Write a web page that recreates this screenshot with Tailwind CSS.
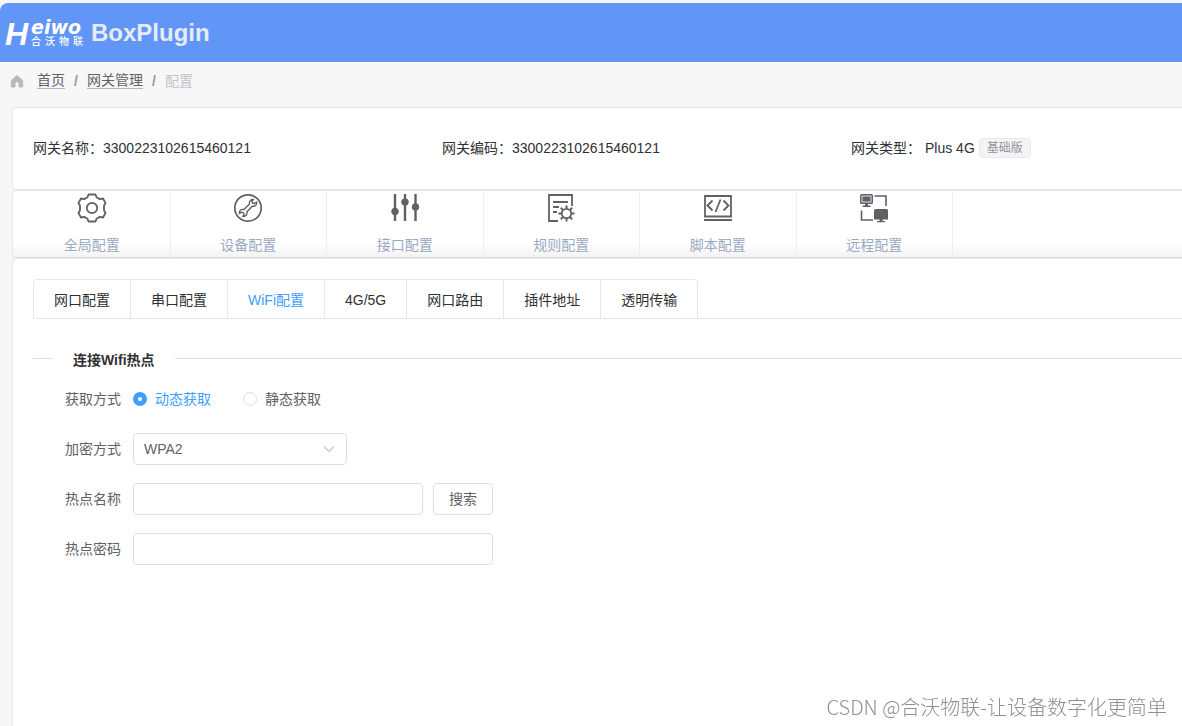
<!DOCTYPE html>
<html lang="zh-CN">
<head>
<meta charset="utf-8">
<title>BoxPlugin</title>
<script src="https://cdn.jsdelivr.net/npm/@tailwindcss/browser@4"></script>
</head>
<body class="flex h-screen flex-col overflow-hidden bg-[#f7f7f7] pt-[3px] font-['Liberation_Sans','Noto_Sans_CJK_SC',sans-serif] text-sm text-[#303133]">
  <header class="flex h-[59px] shrink-0 items-center gap-[6px] rounded-tl-lg bg-[#6196f6] pl-[5px]">
    <svg class="h-10 w-20 overflow-visible" viewBox="0 0 80 40" fill="#fff" role="img" aria-label="合沃物联">
      <text x="0" y="32" font-family="Liberation Sans" font-size="32" font-weight="bold" font-style="italic">H</text>
      <text x="26" y="21" font-family="DejaVu Sans" font-size="19" font-weight="bold" font-style="italic">eiwo</text>
      <text y="32" x="26 40 54 68" font-family="Noto Sans CJK SC" font-size="10" font-weight="500">合沃物联</text>
    </svg>
    <h1 class="text-2xl font-bold text-[#e6ebf5]">BoxPlugin</h1>
  </header>

  <nav class="flex h-[37px] shrink-0 items-center pl-[10px] text-[#606266]" aria-label="面包屑">
    <svg class="mr-[13px] h-[14px] w-[14px]" viewBox="0 0 14 14" fill="#b9b9b9"><path d="M7 1.500 1.300 6.500V13H5V9.500a2 2 0 0 1 4 0V13h3.700V6.500z" stroke="#b9b9b9" stroke-linejoin="round"/></svg>
    <a href="#" class="border-b border-[#b5b5b5] leading-4">首页</a>
    <span class="w-[22px] text-center font-bold text-[#999]">/</span>
    <a href="#" class="border-b border-[#b5b5b5] leading-4">网关管理</a>
    <span class="w-[22px] text-center font-bold text-[#999]">/</span>
    <span class="leading-4 text-[#c0c4cc]">配置</span>
  </nav>

  <main class="ml-3 mt-2 flex grow flex-col">
    <section class="flex h-[83px] shrink-0 items-center overflow-hidden whitespace-nowrap rounded-l border border-r-0 border-[#e4e7ed] bg-white pb-px pl-5">
      <p class="w-[409px] shrink-0">网关名称：3300223102615460121</p>
      <p class="w-[409px] shrink-0">网关编码：3300223102615460121</p>
      <p class="flex items-center">网关类型：<span class="ml-1">Plus 4G</span><span class="ml-1 rounded border border-[#e9e9eb] bg-[#f4f4f5] px-[7px] text-xs leading-[18px] text-[#909399]">基础版</span></p>
    </section>

    <section class="h-[68px] shrink-0 overflow-hidden rounded-l border border-r-0 border-[#e4e7ed] border-b-[#d8dbe3] bg-linear-to-b from-white from-80% to-[#f3f3f5] pl-px">
      <div class="grid h-full w-[1252px] grid-cols-8 text-[#99a9c4]">
        <a href="#" class="flex flex-col items-center gap-3 border-r border-[#ebeef5] pt-[2px]">
          <svg class="h-[30px] w-[30px] shrink-0" viewBox="0 0 30 30" fill="none" stroke="#5f6165" stroke-width="1.800"><path d="M11.500 1.500h7l1 2.800 3.300 1.800 3.200-.6 2.500 4.500-1.500 2.700v4.600l1.500 2.700-2.500 4.500-3.200-.6-3.300 1.800-1 2.800h-7l-1-2.800-3.300-1.800-3.200.6L1.500 20 3 17.300v-4.600L1.500 10 4 5.500l3.200.6 3.300-1.800z" stroke-linejoin="round"/><circle cx="15" cy="15" r="5.200"/></svg>
          <span class="leading-5">全局配置</span>
        </a>
        <a href="#" class="flex flex-col items-center gap-3 border-r border-[#ebeef5] pt-[2px]">
          <svg class="h-[30px] w-[30px] shrink-0" viewBox="0 0 30 30" fill="none" stroke="#5f6165"><circle cx="15" cy="15" r="13.200" stroke-width="1.700"/><path d="M20.500 6.500c-2.500-.3-4.500 1.500-4 4.500L11 16.500c-3-.7-5 1.200-4.500 4l2-1.300 2 .6.500 2-1.300 1.600c3 .3 4.800-1.800 4.200-4.700l5.500-5.500c2.800.6 4.800-1.500 4.200-4.200L21.500 10.500l-2-.5-.5-2z" stroke-width="1.400" stroke-linejoin="round"/></svg>
          <span class="leading-5">设备配置</span>
        </a>
        <a href="#" class="flex flex-col items-center gap-3 border-r border-[#ebeef5] pt-[2px]">
          <svg class="h-[30px] w-[30px] shrink-0" viewBox="0 0 30 30" fill="#5f6165" stroke="#5f6165"><path d="M5 1v27M15 1v27M25.500 1v27" stroke-width="2.400"/><circle cx="5" cy="18.500" r="3.300"/><circle cx="15" cy="9" r="3.300"/><circle cx="25.500" cy="14" r="3.300"/></svg>
          <span class="leading-5">接口配置</span>
        </a>
        <a href="#" class="flex flex-col items-center gap-3 border-r border-[#ebeef5] pt-[2px]">
          <svg class="h-[30px] w-[30px] shrink-0" viewBox="0 0 30 30" fill="none" stroke="#5f6165" stroke-width="1.800"><path d="M12 28H3V2h23v11M7 9h15M7 14h6M7 19h4"/><circle cx="20.500" cy="20.500" r="4.700"/><path d="M20.500 12.500v3.300M20.500 25.200v3.300M12.500 20.500h3.300M25.200 20.500h3.300M14.800 14.800l2.400 2.400M23.800 23.800l2.400 2.400M14.800 26.200l2.400-2.400M23.800 17.200l2.400-2.400" stroke-width="2"/></svg>
          <span class="leading-5">规则配置</span>
        </a>
        <a href="#" class="flex flex-col items-center gap-3 border-r border-[#ebeef5] pt-[2px]">
          <svg class="h-[30px] w-[30px] shrink-0" viewBox="0 0 30 30" fill="none" stroke="#5f6165" stroke-width="1.800"><path d="M2 3h26v20.500H2zM1 27h28M9.500 7.500 4.500 12.500l5 5M20.500 7.500l5 5-5 5M17.500 6.500l-5 12.500"/></svg>
          <span class="leading-5">脚本配置</span>
        </a>
        <a href="#" class="flex flex-col items-center gap-3 border-r border-[#ebeef5] pt-[2px]">
          <svg class="h-[30px] w-[30px] shrink-0" viewBox="0 0 30 30" fill="#5f6165"><rect x="1" y="1" width="13" height="10" rx="1.500"/><rect x="3" y="3" width="9" height="6" fill="none" stroke="#fff" stroke-width=".8"/><path d="M6 11h3v1.500h2.500V14h-8v-1.500H6zM16.500 16h11a1.500 1.500 0 0 1 1.500 1.500v9h-5.500V28H26v1.200h-8V28h2.500v-1.500H15v-9a1.500 1.500 0 0 1 1.500-1.500z"/><path d="M15.500 3H27v10M2.500 17.500V27H14" fill="none" stroke="#5f6165" stroke-width="1.600"/></svg>
          <span class="leading-5">远程配置</span>
        </a>
      </div>
    </section>

    <section class="grow rounded-tl border-l border-t border-[#e4e7ed] bg-white pl-5 pt-5">
      <div class="flex h-10 border-b border-[#e4e7ed]" role="tablist">
        <div class="flex h-10 divide-x divide-[#e4e7ed] rounded-t border-x border-t border-[#e4e7ed]">
          <button role="tab" class="px-5">网口配置</button>
          <button role="tab" class="px-5">串口配置</button>
          <button role="tab" aria-selected="true" class="px-5 text-[#409eff]">WiFi配置</button>
          <button role="tab" class="px-5">4G/5G</button>
          <button role="tab" class="px-5">网口路由</button>
          <button role="tab" class="px-5">插件地址</button>
          <button role="tab" class="px-5">透明传输</button>
        </div>
      </div>

      <div class="mt-[29px] flex h-5 items-center gap-5">
        <span class="h-px w-5 bg-[#dcdfe6]"></span>
        <h2 class="pt-1 font-bold">连接Wifi热点</h2>
        <span class="h-px grow bg-[#dcdfe6]"></span>
      </div>

      <form class="mt-[15px] flex flex-col gap-[18px] text-[#606266]">
        <div class="flex h-8 items-center gap-3" role="radiogroup" aria-labelledby="mode">
          <span id="mode" class="w-[88px] text-right">获取方式</span>
          <label class="flex items-center gap-2 text-[#409eff]"><input type="radio" name="mode" checked class="h-[14px] w-[14px] appearance-none rounded-full border border-[#dcdfe6] bg-white checked:border-[5px] checked:border-[#409eff]">动态获取</label>
          <label class="ml-5 flex items-center gap-2"><input type="radio" name="mode" class="h-[14px] w-[14px] appearance-none rounded-full border border-[#dcdfe6] bg-white checked:border-[5px] checked:border-[#409eff]">静态获取</label>
        </div>
        <div class="flex h-8 items-center gap-3">
          <label for="enc" class="w-[88px] text-right">加密方式</label>
          <div class="grid h-8 w-[214px] items-center">
            <select id="enc" class="col-start-1 row-start-1 h-8 appearance-none rounded border border-[#dcdfe6] bg-white pl-[10px]"><option>WPA2</option></select>
            <svg class="pointer-events-none col-start-1 row-start-1 mr-3 h-3 w-3 justify-self-end" viewBox="0 0 12 12" fill="none" stroke="#c0c4cc" stroke-width="1.200"><path d="m1 3.500 5 5 5-5"/></svg>
          </div>
        </div>
        <div class="flex h-8 items-center gap-3">
          <label for="ssid" class="w-[88px] text-right">热点名称</label>
          <div class="flex gap-[10px]">
            <input id="ssid" type="text" class="h-8 w-[290px] rounded border border-[#dcdfe6] px-3">
            <button type="button" class="h-8 w-[60px] rounded border border-[#dcdfe6]">搜索</button>
          </div>
        </div>
        <div class="flex h-8 items-center gap-3">
          <label for="pwd" class="w-[88px] text-right">热点密码</label>
          <input id="pwd" type="password" class="h-8 w-[360px] rounded border border-[#dcdfe6] px-3">
        </div>
      </form>
    </section>
  </main>

  <p class="fixed bottom-1 right-[15px] whitespace-nowrap font-['Noto_Sans_CJK_SC',sans-serif] text-xl font-light leading-[30px] text-[#8f8f8f]">CSDN @合沃物联-让设备数字化更简单</p>
</body>
</html>
